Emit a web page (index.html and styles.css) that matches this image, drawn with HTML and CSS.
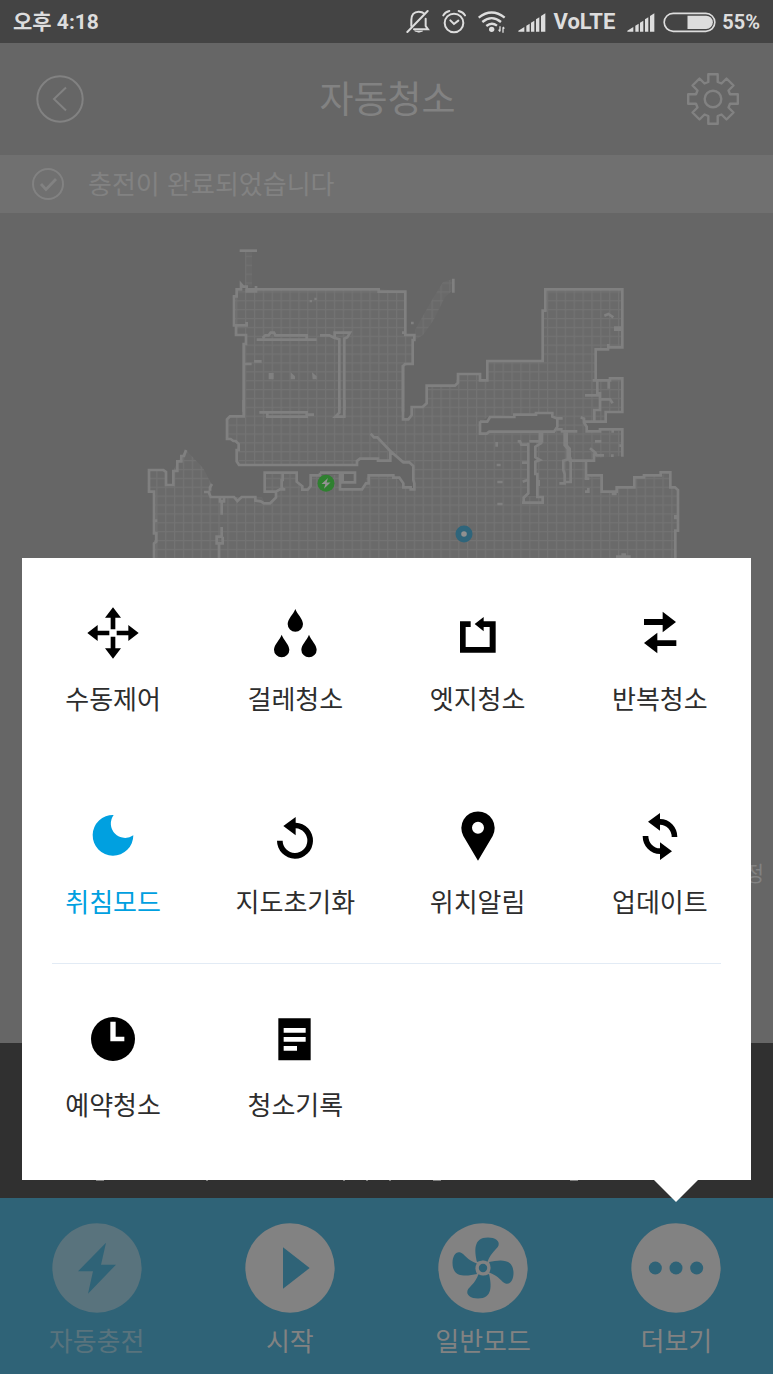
FILE: index.html
```html
<!DOCTYPE html>
<html lang="ko">
<head>
<meta charset="utf-8">
<meta name="viewport" content="width=device-width, initial-scale=1">
<title>자동청소</title>
<link rel="stylesheet" href="styles.css">
</head>
<body>
<div class="app">
  <div class="status">
    <span class="status-time">오후 4:18</span>
    <div class="status-icons">
      <svg class="ic-bell" viewBox="60 25 72 78" fill="none" stroke="#ddd" stroke-width="6" stroke-linecap="round" aria-hidden="true">
        <path d="M76 76V58C76 43 84 33 98 33C105 33 111 35 115 39"/><path d="M119 54V76L126 86H84"/><path d="M64 94L125 31"/><path d="M87 91H110Q99 99 87 91Z" fill="#ddd" stroke-width="2"/>
      </svg>
      <svg class="ic-bell" viewBox="164 25 72 78" fill="none" stroke="#ddd" stroke-width="6" stroke-linecap="round" aria-hidden="true">
        <circle cx="200" cy="67" r="28"/><path d="M189 59L200 70L213 60"/><path d="M168 44Q173 34 186 31M214 31Q228 34 233 44"/>
      </svg>
      <svg class="ic-wifi" viewBox="273 25 84 78" fill="none" stroke="#ddd" stroke-width="7" aria-hidden="true">
        <path d="M275 51Q314 20 353 51"/><path d="M286 64Q314 41 342 64"/><path d="M298 76Q314 63 330 75"/><circle cx="314" cy="86" r="8" fill="#ddd" stroke="none"/>
        <path d="M339 77V92M348 80V96M335 87L339 93M352 84L348 79" stroke-width="4"/>
      </svg>
      <div class="carrier">
        <svg class="ic-wifi" viewBox="392 25 84 78" fill="#ddd" aria-hidden="true"><path d="M393 93V90L411 79V93ZM417 93V75L427 69V93ZM431 93V66L441 60V93ZM446 93V56L456 50V93ZM461 93V46L474 38V93Z"/></svg>
        <span class="volte">VoLTE</span>
      </div>
      <div class="carrier">
        <svg class="ic-wifi" viewBox="392 25 84 78" fill="#ddd" aria-hidden="true"><path d="M393 93V90L411 79V93ZM417 93V75L427 69V93ZM431 93V66L441 60V93ZM446 93V56L456 50V93ZM461 93V46L474 38V93Z"/></svg>
        <div class="battery">
          <svg class="ic-battery" viewBox="830 25 158 78" aria-hidden="true"><rect x="833" y="38" width="152" height="54" rx="27" fill="none" stroke="#ddd" stroke-width="5"/><path d="M903 45H959A20 20 0 0 1 959 85H903Z" fill="#ddd"/></svg>
          <span class="percent">55%</span>
        </div>
      </div>
    </div>
  </div>

  <header class="header">
    <button class="icon-btn" type="button" aria-label="뒤로">
      <svg class="ic-back" viewBox="-24 -24 48 48" fill="none" stroke="#828282" stroke-width="2"><circle r="22.7"/><path d="M6-11.5L-6 0L6 11.5"/></svg>
    </button>
    <h1 class="title">자동청소</h1>
    <button class="icon-btn icon-btn-end" type="button" aria-label="설정">
      <svg class="ic-gear" viewBox="-26 -26 52 52" fill="none" stroke="#828282" stroke-width="2.4" stroke-linejoin="round"><circle r="8.3"/><path d="M-4.7-24.8H4.7V-17L8.5-15.5L13.5-20.5L20.5-13.5L15.5-8.5L17-4.7H24.8V4.7H17L15.5 8.5L20.5 13.5L13.5 20.5L8.5 15.5L4.7 17V24.8H-4.7V17L-8.5 15.5L-13.5 20.5L-20.5 13.5L-15.5 8.5L-17 4.7H-24.8V-4.7H-17L-15.5-8.5L-20.5-13.5L-13.5-20.5L-8.5-15.5L-4.7-17Z"/></svg>
    </button>
  </header>

  <div class="notice">
    <svg class="ic-check" viewBox="-16 -16 32 32" fill="none" stroke="#828282" aria-hidden="true"><circle r="15" stroke-width="2"/><path d="M-7 0L-2 5.5L8-5" stroke-width="2.8"/></svg>
    <p class="notice-text">충전이 완료되었습니다</p>
  </div>

  <main class="map">
    <svg class="map-svg" viewBox="0 213 773 347" role="img" aria-label="청소 지도">
      <defs>
        <pattern id="grid" x="271.7" y="300.2" width="8.88" height="8.88" patternUnits="userSpaceOnUse"><rect width="8.88" height="8.88" fill="#6a6a6a"/><path d="M0 .6H8.88M.6 0V8.88" stroke="#737373" stroke-width="1.2"/></pattern>
      </defs>
      <path fill="url(#grid)" d="M237 289H379L405 292V336H413V364L403 366V419H408L412 413V407L423 406L427 403V386H455L458 374H480V380H487V361H543V311H545V289H622V347L596 349V380L622 378V412H606V422H587V431H622V456L594 458L586 461V475H602V492H617V487H634V477L644 475H661L671 472V487L678 490V531H675V560H154V492H149V470H165L166 486H173V471L181 456L186 450L203 468L212 485L211 497H262L265 505L276 497V492H265V473H297V482L302 489H309L311 475H340V489H362L368 475H394L403 487L413 489V465L402 462L390 451V461H378V459H360L357 465H239L237 450L238 444L227 438V419L230 416H244V345L246 335H236V325H234V297Z"/>
      <path fill="url(#grid)" opacity=".8" d="M245 252H252V287H245ZM453 279L443 282L432 300L415 330V340L423 335L433 321L445 297L453 290Z"/>
      <path fill="#666" d="M480 422L488 417L536 413H552L557 419L556 430L480 433ZM529 442H536L535 468L538 496H527Z"/>
      <g fill="none" stroke="#808080" stroke-width="8">
        <g transform="translate(140 230) scale(.33333)">
          <path d="M299 62H351"/>
          <path d="M320 276V286H282V199H290V178H303V162L310 170H320V184H348V168M320 178H716V185H796V308H786M792 315H823V330H818V402H795L789 408V545"/>
          <path d="M288 286V315H318V342H311V545M311 402H335M342 394H365"/>
          <path d="M350 329H530M368 324L376 316H386L392 308H402L406 316H500V329M540 316H568L582 323L598 328V540M584 324V308H630L622 322L613 326V540"/>
          <path fill="#808080" stroke="none" d="M386 429h15v19h-15zM452 427l13 12v9h-13zM516 427l14 12v9h-12zM509 210h7v7h-7zM523 203h7v7h-7zM813 275h8v8h-8z"/>
        </g>
        <g transform="translate(140 400) scale(.33333)">
          <path d="M311 0V49H270L261 58V117H272L280 123H287L296 132V150H290V184L297 195H651V183L660 176H714V182H751V152M692 101L702 112H712L750 152L790 187H808L820 198V240L823 250V268H812V262H790V250L778 233H760V226H686V250H678L666 268H600V218M540 218H645V247H608V220"/>
          <path d="M540 218V226H512V258L503 269H487V259L470 245V218H374V275H408V292L390 310H372L362 304L346 302V291H305L292 303L282 291H212L206 276H192M210 272V262L216 252M428 218V240H425V268H436M408 275L430 262"/>
          <path d="M240 291V304H252V291M245 304V344M245 381V410H230V430H248V410M237 430V480"/>
          <path d="M42 480V430L49 425V400H42V275H27V210H70L78 216V255H100V213H112V184H124V168H132L138 150M46 362H52"/>
          <path d="M358 37H500V50H382V37M500 44H522M598 0V38L586 50H613V0"/>
        </g>
        <g transform="translate(400 260) scale(.33333)">
          <path d="M160 56V98M9 315V478H25L35 465V441H68L80 430V377H165L174 368V342H240V361H262V303H428V152H436V88H667V262H625V252M628 268H587V361"/>
          <path d="M578 361H630V355H667V456H617V485H555M626 361V386M592 361V400H600V450H583V485M555 406H600M600 418H630L638 430M542 472L552 476V488L560 500V514H600V508H667V590"/>
          <path d="M240 484V521H260L268 515H462L472 500V475H488M470 475L457 470V459H408V464H343V471H270L262 485H240M470 508H488M482 514H532"/>
          <path d="M613 167L625 162L640 172M642 203H667M642 209H667M290 546V560M585 544H604M634 514h8M658 557h8"/>
        </g>
        <g transform="translate(420 400) scale(.33333)">
          <path d="M293 124H300L304 134H325M328 124H366V97M360 97V130M325 128V280L311 293V308H368V291H352V222H346V185L360 180L346 172V140L366 128M306 188H325M308 245L322 240M356 240V258M306 308H320"/>
          <path d="M434 97V136L443 146V178M440 97V136L449 146V178M455 175L430 182V210L434 222V250H418M452 182V246H430M446 182H522V160M510 145L526 158L530 166H552M573 167h8"/>
          <path d="M498 182V236H508M498 226H545V275H590V262H643V232H672V226H722V217H751V262H765L774 270V392H766V480M505 264V275H495M575 282H590M766 345V358"/>
          <path d="M230 195H242M232 246H248M232 312H248M588 470H632M604 464H618"/>
        </g>
      </g>
      <circle cx="326" cy="483.300" r="8.500" fill="#2f8030"/><path fill="#939393" d="M328 478L321.500 484H325.300L324 488.800L330.500 482.600H326.500Z"/>
      <circle cx="464" cy="534" r="8.500" fill="#2f657b"/><circle cx="464" cy="534" r="2.800" fill="#909090"/>
    </svg>
    <span class="map-hint">정</span>
  </main>

  <div class="summary">
    <svg class="summary-marks" viewBox="0 0 773 155" fill="#828282" aria-hidden="true"><path d="M96 136H104V138H96ZM206 136H208V138H206ZM343 136H345V138H343ZM366 136H368V138H366ZM389 136H391V138H389ZM433 136H441V138H433ZM570 136H578V138H570Z"/></svg>
  </div>

  <nav class="nav">
    <button class="nav-item is-off" type="button">
      <svg class="nav-icon" viewBox="-135 -135 270 270" aria-hidden="true"><circle r="134" fill="#59737d"/><path fill="#2f6377" d="M27-76L-57 10H-12L-27 77L57-10H12Z"/></svg>
      자동충전
    </button>
    <button class="nav-item" type="button">
      <svg class="nav-icon" viewBox="-135 -135 270 270" aria-hidden="true"><circle r="134" fill="#828282"/><path fill="#2f6377" d="M-21-62L59 0L-21 62Z"/></svg>
      시작
    </button>
    <button class="nav-item" type="button">
      <svg class="nav-icon" viewBox="-45 -45 90 90" aria-hidden="true"><circle r="44.700" fill="#828282"/>
        <g fill="#2f6377"><path id="blade" d="M-6-6C-8.500-17-10-30.500 5-30.500C12-30.500 17-27 15.500-22.500C14-18.500 8-16 4.500-6.200Q0-9-6-6Z"/><use href="#blade" transform="rotate(90)"/><use href="#blade" transform="rotate(180)"/><use href="#blade" transform="rotate(270)"/></g>
        <circle r="5.700" fill="#2f6377" stroke="#828282" stroke-width="3"/></svg>
      일반모드
    </button>
    <button class="nav-item" type="button" aria-expanded="true">
      <svg class="nav-icon" viewBox="-135 -135 270 270" aria-hidden="true"><circle r="134" fill="#828282"/><g fill="#2f6377"><circle cx="-62" r="19.500"/><circle r="19.500"/><circle cx="62" r="19.500"/></g></svg>
      더보기
    </button>
  </nav>

  <div class="overlay">
    <section class="menu" aria-label="더보기">
      <div class="menu-grid">
        <button class="menu-item" type="button"><svg class="menu-icon" viewBox="-78 -78 156 156" aria-hidden="true"><path id="arm" d="M0-77L24-46H7V-11H-7V-46H-24Z"/><use href="#arm" transform="rotate(90)"/><use href="#arm" transform="rotate(180)"/><use href="#arm" transform="rotate(270)"/></svg>수동제어</button>
        <button class="menu-item" type="button"><svg class="menu-icon" viewBox="-78 -78 156 156" aria-hidden="true"><path id="drop" d="M1-72C7-56 24-42 24-27A23 23 0 0 1-22-27C-22-42-5-56 1-72Z"/><use href="#drop" transform="translate(-41 77)"/><use href="#drop" transform="translate(41 77)"/></svg>걸레청소</button>
        <button class="menu-item" type="button"><svg class="menu-icon" viewBox="-78 -78 156 156" aria-hidden="true"><path d="M-54-35H-22V-18H-37V42H35V-18H17V-5L-10-27L17-48V-35H53V59H-54Z"/></svg>엣지청소</button>
        <button class="menu-item" type="button"><svg class="menu-icon" viewBox="-78 -78 156 156" aria-hidden="true"><path d="M-48-42H8V-64L48-33L8-2V-24H-48ZM49 22H-8V-1L-48 30L-8 61V39H49Z"/></svg>반복청소</button>
        <button class="menu-item is-active" type="button" aria-pressed="true"><svg class="menu-icon" viewBox="-78 -78 156 156" aria-hidden="true"><path d="M2-63A61 61 0 1 0 61-2A43 43 0 0 1 2-63Z"/></svg>취침모드</button>
        <button class="menu-item" type="button"><svg class="menu-icon" viewBox="-78 -78 156 156" aria-hidden="true"><path d="M-54 14A54 54 0 1 0 2-40V-57L-35-30L2-2V-23A37 37 0 1 1-37 14Z"/></svg>지도초기화</button>
        <button class="menu-item" type="button"><svg class="menu-icon" viewBox="-78 -78 156 156" aria-hidden="true"><path fill-rule="evenodd" d="M0 74L-44 0A50 50 0 1 1 44 0ZM0-43A18 18 0 1 0 0-7A18 18 0 1 0 0-43Z"/></svg>위치알림</button>
        <button class="menu-item" type="button"><svg class="menu-icon" viewBox="-78 -78 156 156" aria-hidden="true"><path id="turn" d="M52 3A52 54 0 0 0 0-51V-69L-36-43L0-16V-34A35 37 0 0 1 35 3Z"/><use href="#turn" transform="translate(0 3) rotate(180)"/></svg>업데이트</button>
      </div>
      <hr class="menu-rule">
      <div class="menu-grid">
        <button class="menu-item" type="button"><svg class="menu-icon" viewBox="-78 -78 156 156" aria-hidden="true"><circle r="66"/><path fill="#fff" d="M-8-52H8V-7H34V7H-8Z"/></svg>예약청소</button>
        <button class="menu-item" type="button"><svg class="menu-icon" viewBox="-78 -78 156 156" aria-hidden="true"><path d="M-50-62H47V64H-50Z"/><path fill="#fff" d="M-34-33H32V-19H-34ZM-34-6H32V8H-34ZM-34 21H6V35H-34Z"/></svg>청소기록</button>
      </div>
    </section>
    <svg class="menu-arrow" viewBox="0 0 44 22" aria-hidden="true"><path fill="#fff" d="M0 0H44L22 22Z"/></svg>
  </div>
</div>
</body>
</html>
```
FILE: styles.css
```css
* { box-sizing: border-box; }

body {
  margin: 0;
  background: #666;
  font-family: "Noto Sans CJK KR", sans-serif;
}

button {
  padding: 0;
  border: 0;
  background: none;
  font: inherit;
  color: inherit;
  cursor: pointer;
}

svg { display: block; flex: none; }

.app {
  position: relative;
  display: flex;
  flex-direction: column;
  min-height: 100vh;
  color: #828282;
}

/* Status bar */
.status {
  display: flex;
  align-items: center;
  justify-content: space-between;
  height: 43px;
  padding: 0 13px;
  background: #444;
  color: #ddd;
  font-family: Roboto, "Noto Sans CJK KR", sans-serif;
  font-weight: 700;
  font-size: 22px;
  line-height: 26px;
}
.status-time { font-size: 21px; }
.status-icons { display: flex; align-items: center; gap: 12px; }
.carrier { display: flex; align-items: center; gap: 8px; }
.battery { display: flex; align-items: center; gap: 6px; }
.percent { font-size: 20px; }
.ic-bell { width: 24px; height: 26px; }
.ic-wifi { width: 28px; height: 26px; }
.ic-battery { width: 53px; height: 26px; }

/* Header */
.header {
  display: grid;
  grid-template-columns: 1fr auto 1fr;
  align-items: center;
  height: 112px;
  padding: 0 34px 0 36px;
}
.icon-btn { justify-self: start; }
.icon-btn-end { justify-self: end; }
.ic-back { width: 48px; height: 48px; }
.ic-gear { width: 52px; height: 52px; }
.title {
  margin: 0;
  padding-bottom: 4px;
  font-size: 37px;
  font-weight: 400;
  line-height: 54px;
}

/* Notice */
.notice {
  display: flex;
  align-items: center;
  gap: 24px;
  height: 58px;
  padding: 0 32px;
  background: #707070;
}
.ic-check { width: 32px; height: 32px; }
.notice-text {
  margin: 0;
  padding-bottom: 2px;
  font-size: 26px;
  line-height: 38px;
}

/* Map */
.map { position: relative; flex: 1; }
.map-svg { width: 100%; height: auto; }
.map-hint {
  position: absolute;
  right: 9px;
  bottom: 155px;
  font-size: 21px;
  line-height: 32px;
}

.summary { background: #303030; }
.summary-marks { width: 100%; height: 155px; }

/* Bottom navigation */
.nav {
  display: grid;
  grid-template-columns: repeat(4, 1fr);
  padding: 25px 0 15px;
  background: #2f6377;
}
.nav-item {
  display: flex;
  flex-direction: column;
  align-items: center;
  gap: 8px;
  font-size: 26px;
  line-height: 38px;
}
.nav-icon { width: 90px; height: 90px; }
.is-off { color: #59737d; }

/* More menu */
.overlay {
  position: absolute;
  right: 0;
  bottom: 172px;
  left: 0;
}
.menu {
  margin: 0 22px;
  padding-bottom: 14px;
  background: #fff;
  color: #2d2d2d;
}
.menu-grid {
  display: grid;
  grid-template-columns: repeat(4, 1fr);
  row-gap: 1px;
}
.menu-item {
  display: flex;
  flex-direction: column;
  align-items: center;
  gap: 20px;
  padding: 49px 0 43px;
  font-size: 26px;
  line-height: 38px;
}
.menu-icon { width: 52px; height: 52px; fill: #000; }
.is-active { color: #00a0e0; }
.is-active .menu-icon { fill: #00a0e0; }
.menu-rule {
  height: 1px;
  margin: 0 30px;
  border: 0;
  background: #e2ebf5;
}
.menu-arrow { width: 44px; height: 22px; margin-left: calc(87.5% - 22px); }
```
